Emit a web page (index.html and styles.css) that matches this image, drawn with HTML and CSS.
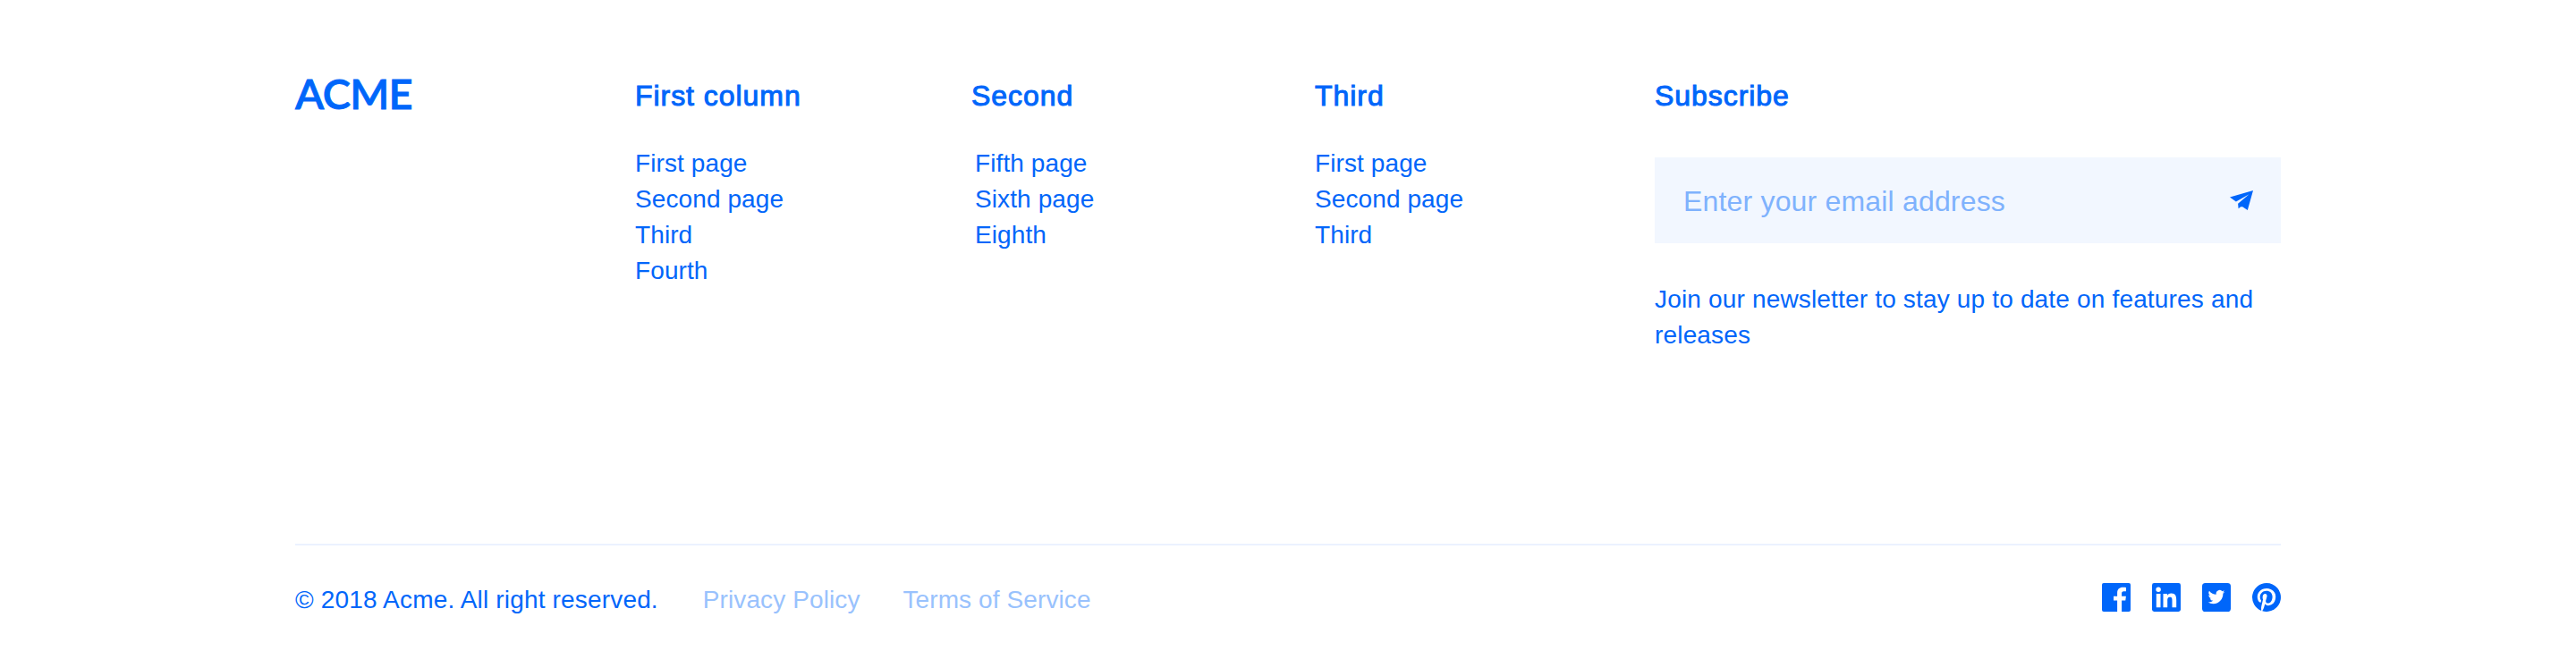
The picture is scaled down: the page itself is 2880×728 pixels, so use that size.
FILE: index.html
```html
<!DOCTYPE html>
<html lang="en">
<head>
<meta charset="utf-8">
<title>Acme</title>
<link rel="stylesheet" href="styles.css">
</head>
<body>
<footer class="footer">
  <div class="top">
    <a class="logo">ACME</a>
    <nav class="column">
      <h2 class="heading">First column</h2>
      <ul class="links"><li>First page</li><li>Second page</li><li>Third</li><li>Fourth</li></ul>
    </nav>
    <nav class="column">
      <h2 class="heading heading-second">Second</h2>
      <ul class="links"><li>Fifth page</li><li>Sixth page</li><li>Eighth</li></ul>
    </nav>
    <nav class="column">
      <h2 class="heading">Third</h2>
      <ul class="links"><li>First page</li><li>Second page</li><li>Third</li></ul>
    </nav>
    <section class="column">
      <h2 class="heading">Subscribe</h2>
      <div class="field">
        <span class="placeholder">Enter your email address</span>
        <svg class="send" viewBox="0 0 26 22"><path d="M26 0 0 7.6 6.9 12.5 21.5 4.2 9.1 14.8 9.6 20.3 12.1 18.2 14.2 18.2 19.8 22Z"/></svg>
      </div>
      <p class="note">Join our newsletter to stay up to date on features and releases</p>
    </section>
  </div>
  <div class="bottom">
    <span class="copyright">© 2018 Acme. All right reserved.</span>
    <a class="legal">Privacy Policy</a>
    <a class="legal">Terms of Service</a>
    <div class="social">
      <svg viewBox="0 0 32 32"><rect class="tile" width="32" height="32" rx="2"/><path class="mark" d="M17.1 32V19.4H13V14.7h4.1V11c0-4.1 2.5-6.3 6.2-6.3 1.8 0 3.3.1 3.7.2v4.3h-2.5c-2 0-2.4 1-2.4 2.4v3.1h4.8l-.6 4.7h-4.2V32Z"/></svg>
      <svg viewBox="0 0 32 32"><rect class="tile" width="32" height="32" rx="2.4"/><path class="mark" d="M4.8 12h4.7v15.2H4.8ZM7.1 4.4a2.75 2.75 0 1 1 0 5.5 2.75 2.75 0 0 1 0-5.5ZM12.5 12H17v2.1c.6-1.2 2.2-2.5 4.5-2.5 4.8 0 5.7 3.2 5.7 7.3v8.3h-4.7v-7.4c0-1.8 0-4-2.5-4s-2.8 1.9-2.8 3.9v7.5h-4.7Z"/></svg>
      <svg viewBox="0 0 32 32"><rect class="tile" width="32" height="32" rx="3.6"/><path class="mark" transform="translate(6.6 6.2) scale(.78)" d="M24 4.6a10 10 0 0 1-2.8.8 5 5 0 0 0 2.1-2.7c-1 .6-2 1-3.1 1.2a4.9 4.9 0 0 0-8.4 4.5A14 14 0 0 1 1.7 3.2a4.9 4.9 0 0 0 1.5 6.5c-.8 0-1.6-.2-2.2-.6v.1a5 5 0 0 0 3.9 4.8 5 5 0 0 1-2.2.1 5 5 0 0 0 4.6 3.4A9.9 9.9 0 0 1 0 19.5a14 14 0 0 0 7.5 2.2c9.1 0 14-7.5 14-14v-.6A10 10 0 0 0 24 4.6Z"/></svg>
      <svg viewBox="0 0 24 24"><path class="tile" d="M12 0a12 12 0 0 0-4.37 23.17c-.1-.95-.2-2.4.04-3.44l1.4-5.96s-.36-.72-.36-1.78c0-1.67.97-2.91 2.17-2.91 1.03 0 1.52.77 1.52 1.69 0 1.03-.65 2.57-1 4-.28 1.2.6 2.17 1.78 2.17 2.13 0 3.77-2.25 3.77-5.49 0-2.87-2.06-4.88-5.01-4.88-3.41 0-5.41 2.56-5.41 5.2 0 1.03.4 2.14.89 2.74.1.12.11.22.08.34l-.33 1.36c-.05.22-.17.27-.4.16-1.5-.7-2.43-2.89-2.43-4.65 0-3.78 2.75-7.26 7.93-7.26 4.16 0 7.4 2.97 7.4 6.93 0 4.14-2.61 7.46-6.23 7.46-1.22 0-2.36-.63-2.75-1.38l-.75 2.85c-.27 1.04-1 2.35-1.49 3.15A12 12 0 1 0 12 0Z"/></svg>
    </div>
  </div>
</footer>
</body>
</html>
```
FILE: styles.css
```css
* { box-sizing: border-box; }
body {
  margin: 0;
  height: 728px;
  background: #fff;
  color: #0066fa;
  font: 28px/40px "Liberation Sans", Arial, sans-serif;
  letter-spacing: 0.17px;
}
h2, p, ul { margin: 0; padding: 0; }
.footer { width: 2220px; margin: 0 auto; padding-top: 87px; }
.top {
  display: grid;
  grid-template-columns: 380px 380px 380px 380px 700px;
  height: 521px;
}
.logo {
  font: 600 47px/56px Lato, sans-serif;
  letter-spacing: -0.7px;
  -webkit-text-stroke: 0.8px currentColor;
  margin-top: -11px;
}
.heading {
  font-size: 32px;
  font-weight: 400;
  line-height: 40px;
  letter-spacing: 0.95px;
  -webkit-text-stroke: 1px currentColor;
  margin-bottom: 36px;
}
.heading-second { margin-left: -4px; }
.links { list-style: none; letter-spacing: 0.1px; }
.field {
  display: flex;
  align-items: center;
  justify-content: space-between;
  height: 96px;
  margin-top: 49px;
  padding: 0 31px 0 32px;
  background: #f2f7ff;
}
.column:last-child .heading { margin-bottom: 49px; }
.placeholder {
  padding-top: 1px;
  font-size: 32px;
  letter-spacing: 0.18px;
  color: #7fb2fd;
}
.send { width: 26px; height: 22px; fill: #0066fa; }
.note { margin-top: 43px; }
.bottom {
  display: flex;
  align-items: center;
  gap: 49px;
  padding-top: 41px;
  border-top: 2px solid #ebf2ff;
}
.copyright { letter-spacing: 0.17px; margin-right: 1px; }
.legal { letter-spacing: 0.1px; color: #99c2fd; }
.legal + .legal { margin-left: -1px; }
.social { display: flex; gap: 24px; margin-left: auto; padding-bottom: 6px; }
.social svg { display: block; width: 32px; height: 32px; }
.tile { fill: #0066fa; }
.mark { fill: #fff; }
```
